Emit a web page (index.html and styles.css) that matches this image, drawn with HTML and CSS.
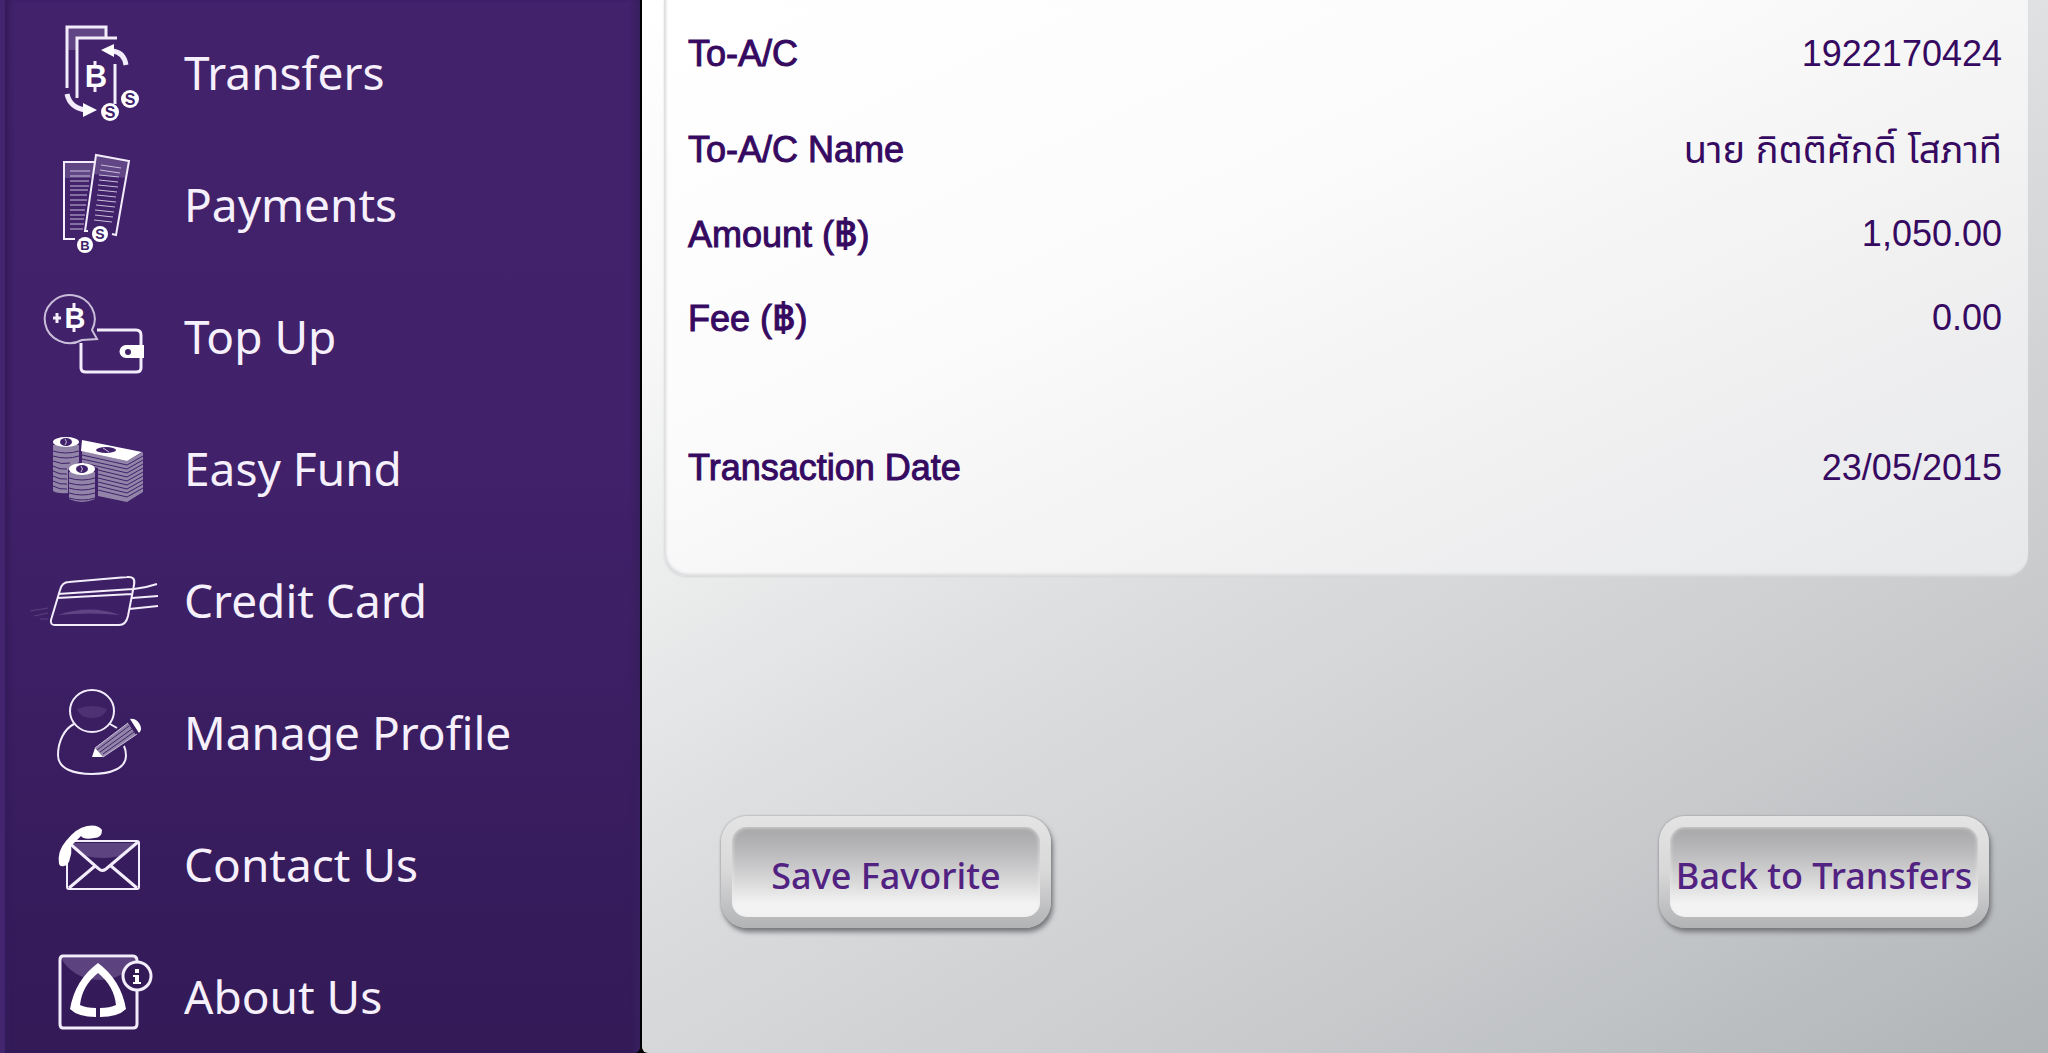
FILE: index.html
```
<!DOCTYPE html>
<html lang="en">
<head>
    <meta charset="UTF-8">
    <meta name="viewport" content="width=device-width, initial-scale=1.0">
    <title>Transfers</title>
    <link rel="stylesheet" href="styles.css">
</head>
<body>

    <nav class="sidebar">
        <a class="menu-item" href="#transfers">
            <svg class="menu-icon" viewBox="0 0 184 132" aria-hidden="true">
                <path class="shine" d="M67 21H106V32H77V44H67Z"/>
                <path class="line" d="M67 82V21H106V31M77 92V32H117M115 58V98"/>
                <path class="thick" d="M112 45Q124 46 126 59M67 88Q70 102 86 104"/>
                <path class="solid" d="M101 44L114 38V51ZM97 104L83 97V111Z"/>
                <text class="glyph" x="96" y="81" font-size="31">B</text>
                <path class="line" d="M95 55V60M95 80V86"/>
                <circle class="solid" cx="110" cy="106" r="9"/>
                <circle class="solid" cx="130" cy="93" r="9"/>
                <text class="coin" x="110" y="112" font-size="16">S</text>
                <text class="coin" x="130" y="99" font-size="16">S</text>
            </svg>
            <span>Transfers</span>
        </a>
        <a class="menu-item" href="#payments">
            <svg class="menu-icon" viewBox="0 0 184 132" aria-hidden="true">
                <path class="shine" d="M64 24H95L92 40H64ZM96 17L129 23L126 40L93 36Z"/>
                <path class="line fine" d="M75 101H64V24H94M88 93H85L96 17L129 23L116 97L112 96"/>
                <path class="hair" d="M70 33H90M70 38H90M70 43H89M70 48H89M70 52H88M70 57H87M70 62H87M70 67H86M70 72H85M70 77H85M70 81H84M70 86H84M70 91H83"/>
                <path class="hair" d="M101 27L121 30M100 32L120 35M99 37L119 39M99 42L118 44M98 47L118 49M98 52L117 54M97 57L116 59M97 62L116 64M96 67L115 69M95 72L114 74M95 77L113 79M94 82L112 84"/>
                <circle class="solid" cx="85" cy="107" r="8"/>
                <circle class="solid" cx="100" cy="96" r="8"/>
                <text class="coin" x="85" y="112" font-size="13">B</text>
                <text class="coin" x="100" y="101" font-size="14">S</text>
            </svg>
            <span>Payments</span>
        </a>
        <a class="menu-item" href="#topup">
            <svg class="menu-icon" viewBox="0 0 184 132" aria-hidden="true">
                <path class="hair bubble" d="M97 69L92 60A25 24 0 1 0 82 70Z"/>
                <path class="line" d="M97 60H136Q141 60 141 65V98Q141 102 136 102H86Q81 102 81 98V73"/>
                <path class="solid" d="M126 75H144V88H126A6 6 0 0 1 126 75Z"/>
                <circle class="hole" cx="128" cy="82" r="3"/>
                <text class="glyph" x="75" y="58" font-size="29">B</text>
                <path class="line" d="M74 33V38M74 57V62M53 48H61M57 43V53"/>
            </svg>
            <span>Top Up</span>
        </a>
        <a class="menu-item" href="#fund">
            <svg class="menu-icon" viewBox="0 0 184 132" aria-hidden="true">
                <path class="block" d="M53 43H79V60L68 68V91Q58 92 53 89ZM69 70H95V97Q82 103 69 97ZM82 49L127 59L143 50V90L127 100L98 94V66L82 62Z"/>
                <path class="cut" d="M53 49Q66 53 79 49M53 54Q66 58 79 54M53 59Q62 63 70 61M53 64Q60 68 67 67M53 69Q60 73 67 72M53 74Q60 78 67 77M53 79Q60 83 67 82M53 84Q60 88 67 87"/>
                <path class="cut" d="M69 76Q82 80 95 76M69 81Q82 85 95 81M69 86Q82 90 95 86M69 91Q82 95 95 91M69 96Q82 100 95 96"/>
                <path class="cut" d="M82 53L127 63L143 54M82 57L127 67L143 58M84 61L127 71L143 62M98 68L127 75L143 66M98 72L127 79L143 70M98 76L127 83L143 74M98 80L127 87L143 78M98 84L127 91L143 82M98 88L127 95L143 86"/>
                <ellipse class="solid" cx="66" cy="40" rx="13" ry="5"/>
                <ellipse class="solid" cx="82" cy="67" rx="13" ry="6"/>
                <path class="solid" d="M82 38L142 50L127 59L81 49Z"/>
                <ellipse class="hole" cx="66" cy="40" rx="6" ry="4"/>
                <ellipse class="hole" cx="82" cy="67" rx="6" ry="4"/>
                <ellipse class="hole" cx="106" cy="48" rx="10" ry="3"/>
                <path class="hair" d="M65 37Q68 40 65 43M81 64Q84 67 81 70M103 46L109 50"/>
            </svg>
            <span>Easy Fund</span>
        </a>
        <a class="menu-item" href="#card">
            <svg class="menu-icon" viewBox="0 0 184 132" aria-hidden="true">
                <path class="line fine" d="M51 86L60 56Q62 48 69 48L127 43Q136 42 134 51L128 82Q126 91 119 91H55Q50 91 51 86ZM58 60L133 55M57 64L132 60"/>
                <path class="line fine" d="M134 55Q145 54 157 50M132 64L158 62M129 75L158 72"/>
                <path class="shine" d="M58 81Q90 70 120 81Q90 78 58 81Z"/>
                <path class="ghost" d="M30 77L48 74M34 82L48 79M40 85H48"/>
            </svg>
            <span>Credit Card</span>
        </a>
        <a class="menu-item" href="#profile">
            <svg class="menu-icon" viewBox="0 0 184 132" aria-hidden="true">
                <ellipse class="line fine" cx="92" cy="45" rx="22" ry="21"/>
                <path class="shine dim" d="M77 43Q92 37 107 43Q104 52 92 52Q80 52 77 43Z"/>
                <path class="line fine" d="M74 58C64 63 58 76 58 89C58 103 74 108 92 108C111 108 126 102 126 90Q126 84 124 80M110 58L117 62"/>
                <path class="block" d="M95 82L128 57L136 69L103 91L93 91Z"/>
                <path class="cut" d="M97 84L129 60M100 86L132 63M103 88L134 66"/>
                <path class="solid" d="M130 53Q135 52 139 57Q143 63 139 67ZM95 82L103 91L92 91Z"/>
                <path class="hair" d="M95 82L128 57M103 91L137 68"/>
            </svg>
            <span>Manage Profile</span>
        </a>
        <a class="menu-item" href="#contact">
            <svg class="menu-icon" viewBox="0 0 184 132" aria-hidden="true">
                <path class="shine" d="M70 45H136L120 58Q102 62 86 58Z"/>
                <rect class="line fine" x="67" y="43" width="72" height="48" rx="2"/>
                <path class="line" d="M68 44L99 71Q102 74 106 71L138 44M69 90L95 68M137 90L111 68"/>
                <path class="solid" d="M59 66Q57 53 66 43Q76 30 87 28Q98 26 102 32Q102 40 94 40Q84 42 81 38L71 48Q72 55 70 60Q69 67 64 68Q60 69 59 66Z"/>
            </svg>
            <span>Contact Us</span>
        </a>
        <a class="menu-item" href="#about">
            <svg class="menu-icon" viewBox="0 0 184 132" aria-hidden="true">
                <path class="shine" d="M61 28H135V36Q118 50 98 50Q72 48 61 28Z"/>
                <path class="line" d="M137 61V94Q137 98 133 98H63Q60 98 60 94V30Q60 26 63 26H133Q137 26 137 31"/>
                <path class="solid" fill-rule="evenodd" d="M98 33Q121 50 126 79Q118 87 100 87V78Q110 78 116 75Q114 56 98 43Q82 56 80 75Q86 78 96 78V87Q78 87 70 79Q75 50 98 33Z"/>
                <circle class="line badge" cx="137" cy="46" r="14"/>
                <path class="solid" d="M135 39H139V43H135ZM133 45H139V52H141V54H133V52H135V47H133Z"/>
            </svg>
            <span>About Us</span>
        </a>
    </nav>

    <main class="content">
        <dl class="details">
            <div class="row account">
                <dt>To-A/C</dt>
                <dd>1922170424</dd>
            </div>
            <div class="row">
                <dt>To-A/C Name</dt>
                <dd class="thai" lang="th">นาย กิตติศักดิ์ โสภาที</dd>
            </div>
            <div class="row">
                <dt>Amount (<span class="baht">฿</span>)</dt>
                <dd>1,050.00</dd>
            </div>
            <div class="row">
                <dt>Fee (<span class="baht">฿</span>)</dt>
                <dd>0.00</dd>
            </div>
            <div class="row date">
                <dt>Transaction Date</dt>
                <dd>23/05/2015</dd>
            </div>
        </dl>
        <div class="actions">
            <button type="button">Save Favorite</button>
            <button type="button">Back to Transfers</button>
        </div>
    </main>

</body>
</html>
```
FILE: styles.css
```
* {
    box-sizing: border-box;
}
body {
    margin: 0;
    height: 100vh;
    display: flex;
    gap: 2px;
    overflow: hidden;
    background-color: #000;
    font-family: "Liberation Sans", "Noto Sans Thai", sans-serif;
}

/* left menu */
.sidebar {
    flex: none;
    width: 31.25%;
    padding-top: 6px;
    overflow: hidden;
    border-left: 5px solid #43246f;
    border-bottom-right-radius: 6px;
    background: linear-gradient(#41226b, #40216a 45%, #331a57);
    box-shadow: inset 7px 0 5px -3px #341b5a, inset -8px 0 5px -3px #38205f;
}
.menu-item {
    display: flex;
    align-items: center;
    height: 132px;
    margin-left: -5px;
    color: #f6f0fc;
    font-family: "Noto Sans", sans-serif;
    font-size: 46px;
    line-height: 60px;
    text-decoration: none;
    white-space: nowrap;
}
.menu-icon {
    flex: none;
    width: 184px;
    height: 132px;
}
.line,
.thick,
.hair,
.ghost,
.cut {
    fill: none;
    stroke: #f3ecfa;
    stroke-width: 3;
}
.fine {
    stroke-width: 2;
}
.thick {
    stroke-width: 5;
}
.hair {
    stroke: #c9bdd9;
    stroke-width: 1;
}
.bubble {
    stroke-width: 2;
}
.ghost {
    stroke: #5b417f;
    stroke-width: 1;
}
.cut {
    stroke: #40226a;
    stroke-width: 1;
}
.solid {
    fill: #fff;
}
.block {
    fill: #9284a8;
}
.shine {
    fill: #765f98;
    opacity: 0.6;
}
.dim {
    opacity: 0.3;
}
.hole {
    fill: #40226a;
}
.badge {
    fill: #331a57;
}
.glyph,
.coin {
    font-family: "Liberation Sans", sans-serif;
    font-weight: bold;
    text-anchor: middle;
    fill: #fff;
}
.coin {
    fill: #40226a;
}

/* right side */
.content {
    flex: 1;
    border-bottom-left-radius: 6px;
    background: linear-gradient(150deg, #fff 0%, #f8f8f9 18%, #ebecec 32%, #dcdddf 48%, #c9cbcd 74%, #b1b4b7 100%);
}
.details {
    margin: 0 20px 0 22px;
    padding: 12px 26px 66px 24px;
    border-radius: 0 0 22px 22px;
    background: linear-gradient(155deg, #fff 0%, #fcfcfd 35%, #f1f1f2 68%, #e7e8ea 100%);
    box-shadow: inset 2px -2px 3px #d9dadc, 0 1px 2px #d6d7d8;
}
.row {
    display: flex;
    justify-content: space-between;
    align-items: center;
    height: 84px;
    color: #360a61;
    font-size: 36px;
    line-height: 44px;
}
.account {
    margin-bottom: 12px;
}
.date {
    margin-top: 66px;
}
dt {
    -webkit-text-stroke: 1px #360a61;
}
dd {
    margin: 0;
}
.thai {
    font-size: 38px;
}
.baht {
    font-size: 40px;
}
.actions {
    display: flex;
    justify-content: space-between;
    margin-top: 240px;
    padding: 0 59px 0 79px;
}
button {
    width: 330px;
    height: 112px;
    padding: 6px 0 0;
    border: 11px solid transparent;
    border-radius: 26px;
    background:
        linear-gradient(#a6a6a8, #bcbcbe 30%, #dadadb 62%, #f3f3f3 85%, #f3f3f3) padding-box,
        linear-gradient(#e4e4e4, #d8d8d9 50%, #b2b3b5) border-box;
    box-shadow: inset 0 0 4px #ececec, 2px 4px 5px #77787b, 0 0 2px #88898b;
    color: #522282;
    font-family: "Noto Sans", sans-serif;
    font-size: 36px;
    font-weight: 500;
    white-space: nowrap;
    cursor: pointer;
}
```
